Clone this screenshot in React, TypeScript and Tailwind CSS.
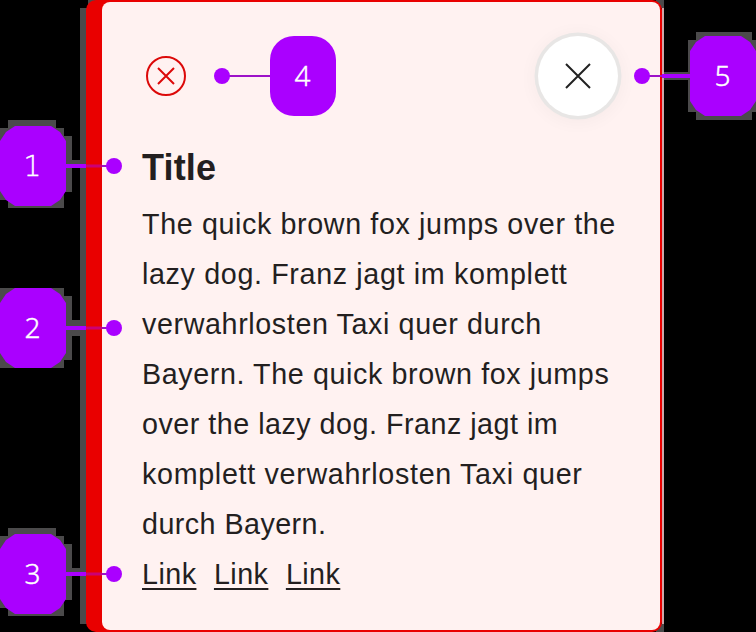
import React from "react";

const lines = [
  { text: "The quick brown fox jumps over the", tracking: "tracking-[0.62px]" },
  { text: "lazy dog. Franz jagt im komplett", tracking: "tracking-[0.64px]" },
  { text: "verwahrlosten Taxi quer durch", tracking: "tracking-[0.61px]" },
  { text: "Bayern. The quick brown fox jumps", tracking: "tracking-[0.6px]" },
  { text: "over the lazy dog. Franz jagt im", tracking: "tracking-[0.5px]" },
  { text: "komplett verwahrlosten Taxi quer", tracking: "tracking-[0.68px]" },
  { text: "durch Bayern.", tracking: "tracking-[0.45px]" },
];

function Halos() {
  return (
    <svg className="absolute inset-0" width="756" height="632" shapeRendering="crispEdges" aria-hidden="true">
      <g fill="#4b4a4b">
        <path d="M80 8h8v616h-8zM88 0h8v8h-8zM656 0h8v8h-8zM656 624h8v8h-8z" />
        <path d="M8 120h48v8h8v8h8v24h14v8H72v24h-8v16H8v-8H0v-72h8z" />
        <path d="M0 288h64v8h8v24h14v16H72v24h-8v8H0z" />
        <path d="M8 528h48v8h8v8h8v24h14v8H72v24h-8v16H8v-8H0v-72h8z" />
        <path d="M696 32h56v8h4v72h-4v8h-56v-8h-8V80h-26v-8h26V40h8z" />
      </g>
      <path d="M662 8h2v616h-2z" fill="#d0a6a8" />
    </svg>
  );
}

function Badge({ n, place, cut }: { n: string; place: string; cut?: boolean }) {
  return (
    <div
      className={`absolute flex h-[80px] w-[66px] items-center justify-center bg-[#aa00ff] text-[28px] leading-none text-white [-webkit-text-stroke:0.4px_white] ${
        n === "1"
          ? "pt-[1px] font-['DejaVu_Sans',sans-serif] font-extralight"
          : "pb-[3px] font-['Noto_Sans',sans-serif] font-light"
      } ${place} ${
        cut
          ? "[clip-path:polygon(0_15px,6px_6px,15px_0,51px_0,60px_6px,66px_15px,66px_65px,60px_74px,51px_80px,15px_80px,6px_74px,0_65px)]"
          : "rounded-[24px]"
      }`}
    >
      <span className="-ml-[1px]">{n}</span>
    </div>
  );
}

function Connectors() {
  return (
    <svg className="absolute inset-0" width="756" height="632" aria-hidden="true">
      {[166, 328, 574].map((y) => (
        <g key={y}>
          <path d={`M66 ${y}H86`} stroke="#aa00ff" strokeWidth="4" />
          <path d={`M86 ${y}H102`} stroke="#cc0074" strokeWidth="3" />
          <path d={`M102 ${y}H114`} stroke="#9d12c8" strokeWidth="2" />
          <circle cx="114" cy={y} r="8" fill="#aa00ff" />
        </g>
      ))}
      <path d="M222 76H270M642 76H662" stroke="#9d12c8" strokeWidth="2" />
      <path d="M662 76H690" stroke="#aa00ff" strokeWidth="4" />
      <circle cx="222" cy="76" r="8" fill="#aa00ff" />
      <circle cx="642" cy="76" r="8" fill="#aa00ff" />
    </svg>
  );
}

export default function App() {
  return (
    <main className="relative h-[632px] w-[756px] overflow-hidden bg-black pl-[86px] font-['Liberation_Sans',Arial,sans-serif] text-[#231f1f]">
      <Halos />
      <section className="relative h-[632px] w-[576px] rounded-[10px] bg-[#e90000] pt-[2px] pr-[2px] pb-[2px] pl-[16px]">
        <div className="h-full rounded-[8px] bg-[#fff2f1] px-[40px]">
          <header className="flex h-[148px] items-center justify-between pr-[2px]">
            <svg className="ml-[3px]" width="42" height="42" viewBox="0 0 42 42" fill="none" stroke="#dc0909" strokeWidth="2" aria-hidden="true">
              <circle cx="21" cy="21" r="19" />
              <path d="M13 13l16 16M29 13l-16 16" />
            </svg>
            <button className="flex h-[80px] w-[80px] items-center justify-center rounded-full bg-white shadow-[0_0_0_3.5px_#e8e6e5,0_2px_16px_6px_rgba(0,0,0,0.03)]" aria-label="Close">
              <svg width="28" height="28" viewBox="0 0 28 28" fill="none" stroke="#222" strokeWidth="2">
                <path d="M2 2l24 24M26 2L2 26" />
              </svg>
            </button>
          </header>
          <h1 className="h-[49px] text-[36px] leading-[36px] font-bold tracking-[0.15px] whitespace-nowrap">Title</h1>
          <p className="text-[28.7px] leading-[50px] whitespace-nowrap">
            {lines.map((line) => (
              <span key={line.text} className={`block ${line.tracking}`}>
                {line.text}
              </span>
            ))}
          </p>
          <nav className="flex gap-[17.5px] text-[28.7px] leading-[50px]">
            {["a", "b", "c"].map((key) => (
              <a key={key} className="tracking-[0.45px] underline decoration-[2px] underline-offset-[4px]">
                Link
              </a>
            ))}
          </nav>
        </div>
      </section>
      <Connectors />
      <Badge n="1" place="left-0 top-[126px]" cut />
      <Badge n="2" place="left-0 top-[288px]" cut />
      <Badge n="3" place="left-0 top-[534px]" cut />
      <Badge n="4" place="left-[270px] top-[36px]" />
      <Badge n="5" place="left-[690px] top-[36px]" cut />
    </main>
  );
}
